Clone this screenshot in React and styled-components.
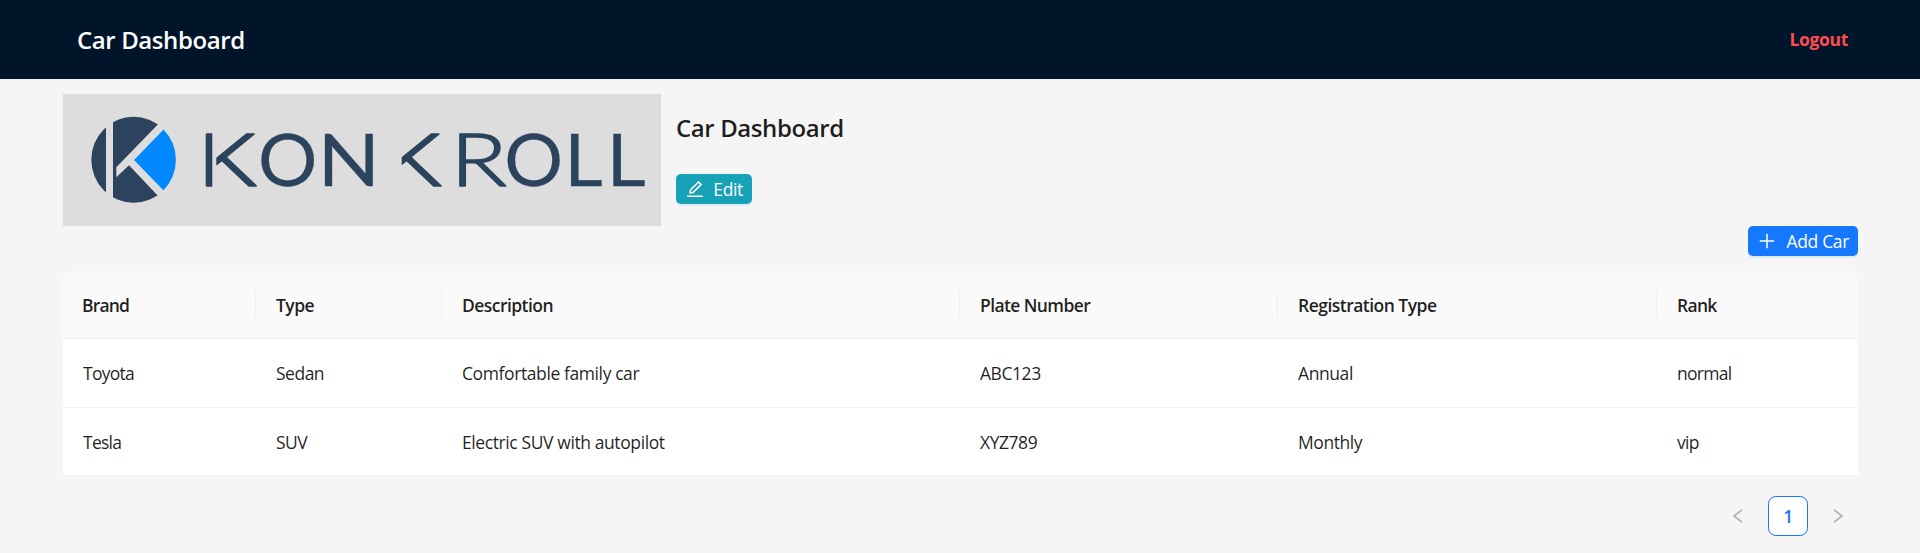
import React from "react";
import styled, { createGlobalStyle } from "styled-components";

const GlobalStyle = createGlobalStyle`
  * { box-sizing: border-box; }
  body {
    margin: 0;
    background: #f5f5f5;
    color: rgba(0, 0, 0, 0.88);
    font-family: "Open Sans", "Noto Sans", sans-serif;
    font-size: 17.5px;
    letter-spacing: -0.45px;
  }
`;

const Page = styled.div`
  min-height: 553px;
  background: #f5f5f5;
`;

const Header = styled.header`
  display: flex;
  align-items: center;
  justify-content: space-between;
  height: 79px;
  padding: 0 72px 0 77px;
  background: #001529;
`;

const Heading = styled.h1`
  margin: 0;
  font-size: 24px;
  font-weight: 600;
  line-height: 36px;
  letter-spacing: -0.4px;
  color: ${(p) => (p.$light ? "#fff" : "rgba(0, 0, 0, 0.88)")};
`;

const LogoutLink = styled.a`
  padding-bottom: 1px;
  font-weight: 700;
  line-height: 28px;
  letter-spacing: -0.35px;
  color: #ff4d4f;
`;

const Content = styled.main`
  padding: 15px 62px 0 63px;
`;

const Company = styled.section`
  display: flex;
  gap: 15px;
  height: 132px;
`;

const LogoBox = styled.div`
  width: 598px;
  height: 132px;
  background: #ddd;

  svg { display: block; }
`;

const CompanyInfo = styled.div`
  display: flex;
  flex-direction: column;
  align-items: flex-start;
  gap: 28px;
  padding-top: 16px;
`;

const Button = styled.button`
  display: inline-flex;
  align-items: center;
  justify-content: space-between;
  width: ${(p) => (p.$teal ? 76 : 110)}px;
  height: 30px;
  padding: 0 9px 0 10px;
  border: 0;
  border-radius: 5px;
  background: ${(p) => (p.$teal ? "#17a2b8" : "#1677ff")};
  box-shadow: 0 2px 0 rgba(5, 145, 255, 0.1);
  color: #fff;
  font: inherit;
  letter-spacing: -0.35px;
  white-space: nowrap;

  svg { flex: none; }
`;

const Actions = styled.div`
  display: flex;
  justify-content: flex-end;
  height: 45px;
`;

const Table = styled.div`
  overflow: hidden;
  border-radius: 10px 10px 0 0;
  background: #fff;
`;

const Row = styled.div`
  display: grid;
  grid-template-columns: 193px 186px 518px 318px 379px 1fr;
  align-items: center;
  height: ${(p) => p.$height}px;
  border-bottom: 1px solid #f0f0f0;
  background: ${(p) => (p.$head ? "#fafafa" : "#fff")};
`;

const HeadCell = styled.div`
  height: 28px;
  padding-left: 20px;
  border-right: 1px solid #f0f0f0;
  font-weight: 600;
  line-height: 28px;
  letter-spacing: ${(p) => p.$tracking}px;

  &:first-child { padding-left: 19px; }
  &:last-child { border-right: 0; }
`;

const Cell = styled.div`
  padding-left: 20px;
  line-height: 28px;
  letter-spacing: ${(p) => p.$tracking}px;
`;

const Pagination = styled.nav`
  display: flex;
  justify-content: flex-end;
  gap: 10px;
  margin-top: 20px;
`;

const PageItem = styled.div`
  display: flex;
  align-items: center;
  justify-content: center;
  width: 40px;
  height: 40px;
  border: 1px solid ${(p) => (p.$active ? "#1677ff" : "transparent")};
  border-radius: 8px;
  background: ${(p) => (p.$active ? "#fff" : "transparent")};
  color: ${(p) => (p.$active ? "#1677ff" : "rgba(0, 0, 0, 0.25)")};
  font-weight: 600;

  svg { margin-right: 1px; }
`;

const Letter = styled.text`
  font-family: ${(p) => (p.$branched ? "Roboto" : "Lato")}, sans-serif;
  font-size: 72px;
  font-weight: ${(p) => (p.$wide ? 300 : 400)};
  letter-spacing: 0;
  fill: #2b435c;
  stroke: #2b435c;
  stroke-width: ${(p) => (p.$wide ? 1.6 : 0.3)};
  stroke-linejoin: round;
`;

// Each letter of the wordmark: character, left edge, horizontal stretch
const letters = [
  ["K", 135.3, 1.31],
  ["O", 195, 1.03],
  ["N", 254.5, 1.14],
  ["K", 320, 1.31],
  ["R", 387.5, 1.29],
  ["O", 441.3, 1.02],
  ["L", 501.3, 1.04],
  ["L", 543.5, 1.06],
];

function KonKrollLogo() {
  return (
    <svg width="598" height="132" viewBox="0 0 598 132" role="img">
      <defs>
        <clipPath id="disc">
          <ellipse cx="70.6" cy="65.8" rx="42.3" ry="43" />
        </clipPath>
      </defs>
      <g clipPath="url(#disc)">
        <path fill="#2b435c" d="M28 20h15v92H28zM50 20H105L53.3 73.3V83.3L66 71.3 106.5 114H50z" />
        <path fill="#0089ff" d="M71 66 103.5 32.4H118v67H103.5z" />
      </g>
      {letters.map(([char, x, stretch]) => (
        <Letter
          key={x}
          $branched={char === "K"}
          $wide={stretch > 1.2}
          transform={`translate(${x} 92) scale(${stretch} 1)`}
        >
          {char}
        </Letter>
      ))}
      <path fill="#dddddd" d="M149.3 36h4v60h-4zM322 36h16.7v60H322z" />
    </svg>
  );
}

function AntIcon({ name, size = 18, weight = 0 }) {
  const shapes = {
    edit: "M257.7 752c2 0 4-.2 6-.5L431.9 722c2-.4 3.9-1.3 5.3-2.8l423.9-423.9a9.96 9.96 0 000-14.1L694.9 114.9c-1.9-1.9-4.4-2.9-7.1-2.9s-5.2 1-7.1 2.9L256.8 538.8c-1.5 1.5-2.4 3.3-2.8 5.3l-29.5 168.2a33.5 33.5 0 009.4 29.8c6.6 6.4 14.9 9.9 23.8 9.9zm67.4-174.4L687.8 215l73.3 73.3-362.7 362.6-88.9 15.7 15.6-89zM880 836H144c-17.7 0-32 14.3-32 32v36c0 4.4 3.6 8 8 8h784c4.4 0 8-3.6 8-8v-36c0-17.7-14.3-32-32-32z",
    plus: "M482 152h60q8 0 8 8v704q0 8-8 8h-60q-8 0-8-8V160q0-8 8-8zM192 474h672q8 0 8 8v60q0 8-8 8H160q-8 0-8-8v-60q0-8 8-8z",
    left: "M724 218.3V141c0-6.7-7.7-10.4-12.9-6.3L260.3 486.8a31.86 31.86 0 000 50.3l450.8 352.1c5.3 4.1 12.9.4 12.9-6.3v-77.3c0-4.9-2.3-9.6-6.1-12.6l-360-281 360-281.1c3.8-3 6.1-7.7 6.1-12.6z",
    right: "M765.7 486.8L314.9 134.7A7.97 7.97 0 00302 141v77.3c0 4.9 2.3 9.6 6.1 12.6l360 281.1-360 281.1c-3.9 3-6.1 7.7-6.1 12.6V883c0 6.7 7.7 10.4 12.9 6.3l450.8-352.1a31.96 31.96 0 000-50.4z",
  };
  return (
    <svg
      width={size}
      height={size}
      viewBox="64 64 896 896"
      fill="currentColor"
      stroke="currentColor"
      strokeWidth={weight}
      aria-hidden="true"
    >
      <path d={shapes[name]} />
    </svg>
  );
}

const columns = [
  { title: "Brand", headTracking: -0.85, tracking: -0.75 },
  { title: "Type", headTracking: -0.55, tracking: -0.5 },
  { title: "Description", headTracking: -0.55, tracking: -0.4 },
  { title: "Plate Number", headTracking: -0.6, tracking: -0.45 },
  { title: "Registration Type", headTracking: -0.52, tracking: -0.42 },
  { title: "Rank", headTracking: -0.7, tracking: -0.7 },
];
const cars = [
  ["Toyota", "Sedan", "Comfortable family car", "ABC123", "Annual", "normal"],
  ["Tesla", "SUV", "Electric SUV with autopilot", "XYZ789", "Monthly", "vip"],
];

export default function App() {
  return (
    <Page>
      <GlobalStyle />
      <Header>
        <Heading $light>Car Dashboard</Heading>
        <LogoutLink>Logout</LogoutLink>
      </Header>
      <Content>
        <Company>
          <LogoBox>
            <KonKrollLogo />
          </LogoBox>
          <CompanyInfo>
            <Heading as="h2">Car Dashboard</Heading>
            <Button $teal>
              <AntIcon name="edit" />
              Edit
            </Button>
          </CompanyInfo>
        </Company>
        <Actions>
          <Button>
            <AntIcon name="plus" />
            Add Car
          </Button>
        </Actions>
        <Table>
          <Row $head $height={68}>
            {columns.map((c) => (
              <HeadCell key={c.title} $tracking={c.headTracking}>
                {c.title}
              </HeadCell>
            ))}
          </Row>
          {cars.map((car, i) => (
            <Row key={car[0]} $height={i === 0 ? 69 : 68}>
              {car.map((v, j) => (
                <Cell key={v} $tracking={columns[j].tracking}>
                  {v}
                </Cell>
              ))}
            </Row>
          ))}
        </Table>
        <Pagination>
          <PageItem>
            <AntIcon name="left" size={16} weight={18} />
          </PageItem>
          <PageItem $active>1</PageItem>
          <PageItem>
            <AntIcon name="right" size={16} weight={18} />
          </PageItem>
        </Pagination>
      </Content>
    </Page>
  );
}
